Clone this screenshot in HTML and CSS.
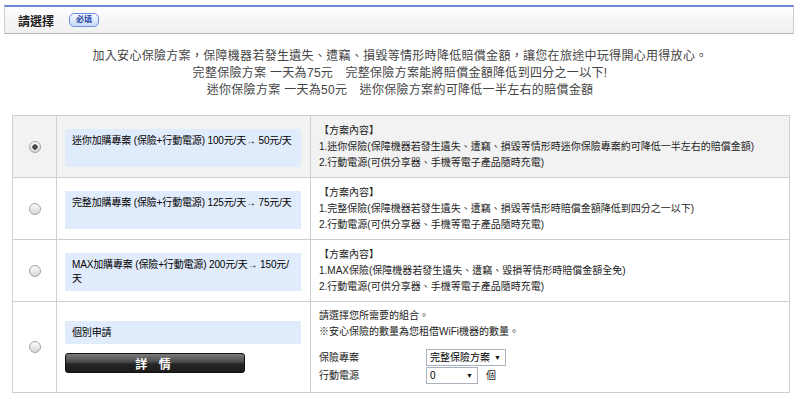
FILE: index.html
```html
<!DOCTYPE html>
<html lang="zh-Hant">
<head>
  <meta charset="UTF-8" />
  <title>請選擇</title>
  <link rel="stylesheet" href="styles.css">
</head>
<body>

  <!-- section heading -->
  <div class="section-head">
    <span class="section-title">請選擇</span>
    <span class="required">必填</span>
  </div>

  <div class="intro">
    <p>加入安心保險方案，保障機器若發生遺失、遭竊、損毀等情形時降低賠償金額，讓您在旅途中玩得開心用得放心。</p>
    <p>完整保險方案 一天為75元　完整保險方案能將賠償金額降低到四分之一以下!</p>
    <p>迷你保險方案 一天為50元　迷你保險方案約可降低一半左右的賠償金額</p>
  </div>

  <!-- plan list -->
  <table class="plans">
    <tr class="selected">
      <td class="pick"><input type="radio" name="plan" checked></td>
      <td class="name"><div class="name-box">迷你加購專案 (保險+行動電源) 100元/天→ 50元/天</div></td>
      <td class="desc">【方案內容】<br>1.迷你保險(保障機器若發生遺失、遭竊、損毀等情形時迷你保險專案約可降低一半左右的賠償金額)<br>2.行動電源(可供分享器、手機等電子產品隨時充電)</td>
    </tr>
    <tr>
      <td class="pick"><input type="radio" name="plan"></td>
      <td class="name"><div class="name-box">完整加購專案 (保險+行動電源) 125元/天→ 75元/天</div></td>
      <td class="desc">【方案內容】<br>1.完整保險(保障機器若發生遺失、遭竊、損毀等情形時賠償金額降低到四分之一以下)<br>2.行動電源(可供分享器、手機等電子產品隨時充電)</td>
    </tr>
    <tr>
      <td class="pick"><input type="radio" name="plan"></td>
      <td class="name"><div class="name-box">MAX加購專案 (保險+行動電源) 200元/天→ 150元/天</div></td>
      <td class="desc">【方案內容】<br>1.MAX保險(保障機器若發生遺失、遭竊、毀損等情形時賠償金額全免)<br>2.行動電源(可供分享器、手機等電子產品隨時充電)</td>
    </tr>
    <tr>
      <td class="pick"><input type="radio" name="plan"></td>
      <td class="name custom">
        <div class="name-box short">個別申請</div>
        <button class="detail-btn">詳 情</button>
      </td>
      <td class="desc custom">
        請選擇您所需要的組合。<br>※安心保險的數量為您租借WiFi機器的數量。
        <div class="combo">
          <span>保險專案</span>
          <span class="select-wrap wide">
            <select><option>完整保險方案</option><option>迷你保險方案</option></select>
            <span class="arrow">▼</span>
          </span>
          <span>行動電源</span>
          <span class="qty">
            <span class="select-wrap">
              <select><option>0</option><option>1</option><option>2</option></select>
              <span class="arrow">▼</span>
            </span>
            個
          </span>
        </div>
      </td>
    </tr>
  </table>

</body>
</html>
```

FILE: styles.css
```css
body {
  margin: 0;
  font-family: "Liberation Sans", "Noto Sans CJK TC", sans-serif;
  color: #222;
  background: #fff;
}

.section-head {
  display: flex;
  align-items: center;
  gap: 15px;
  height: 26px;
  margin: 5px 6px 0 4px;
  padding-left: 13px;
  border: 1px solid #cdcdcd;
  border-top: 2px solid #6f86d9;
  border-bottom-color: #b8b8b8;
  background: linear-gradient(#fdfdfd, #efefef);
}

.section-title {
  font-size: 12px;
  font-weight: bold;
  color: #222;
}

.required {
  width: 28px;
  height: 12px;
  line-height: 12px;
  text-align: center;
  font-size: 8px;
  font-weight: bold;
  color: #1f45a8;
  border: 1px solid #6c8ee0;
  border-radius: 5px;
  background: linear-gradient(#f6f9ff, #c6d9f7);
}

.intro {
  margin: 14px 0 16px;
  text-align: center;
  font-size: 12px;
  line-height: 17px;
  letter-spacing: 0.3px;
  color: #444;
}

.intro p {
  margin: 0;
}

.plans {
  border-collapse: collapse;
  width: 778px;
  margin-left: 12px;
  font-size: 10px;
  color: #222;
}

.plans td {
  border: 1px solid #cfcfcf;
  padding: 0;
}

.plans tr.selected td {
  background: #f2f2f2;
}

.pick {
  width: 43px;
  text-align: center;
  vertical-align: middle;
}

.pick input {
  appearance: none;
  -webkit-appearance: none;
  width: 12px;
  height: 12px;
  margin: 0;
  border: 1px solid #a3a3a3;
  border-radius: 50%;
  background: linear-gradient(#fcfcfc, #d6d6d6);
  vertical-align: middle;
}

.pick input:checked {
  background: radial-gradient(circle, #4a4a4a 0 2.4px, transparent 3px), linear-gradient(#fcfcfc, #d6d6d6);
}

.name {
  width: 236px;
  padding: 13px 9px 10px 8px !important;
  vertical-align: top;
}

.name-box {
  height: 38px;
  box-sizing: border-box;
  padding: 5px 6px 5px 7px;
  line-height: 14px;
  letter-spacing: -0.15px;
  color: #000;
  background: #e0ebfb;
}

.name.custom {
  vertical-align: middle;
  padding: 0 9px 0 8px !important;
}

.name-box.short {
  height: 23px;
  padding: 0 7px;
  line-height: 23px;
}

.detail-btn {
  display: block;
  width: 180px;
  height: 20px;
  margin-top: 9px;
  padding: 0;
  border: 1px solid #111;
  border-radius: 3px;
  background: linear-gradient(#7a7a7a, #4a4a4a 45%, #262626 55%, #1b1b1b);
  color: #fff;
  font-family: inherit;
  font-size: 12px;
  font-weight: bold;
  letter-spacing: 4px;
}

.desc {
  padding: 0 8px !important;
  vertical-align: middle;
  line-height: 16px;
}

.desc.custom {
  vertical-align: top;
  padding: 6px 8px 8px !important;
}

.combo {
  display: grid;
  grid-template-columns: 107px auto;
  grid-auto-rows: 17px;
  row-gap: 1px;
  align-items: center;
  margin-top: 9px;
  line-height: 17px;
}

.qty {
  display: flex;
  align-items: center;
  gap: 8px;
}

.select-wrap {
  position: relative;
  display: inline-block;
  width: 52px;
  height: 17px;
}

.select-wrap.wide {
  width: 80px;
}

.select-wrap select {
  appearance: none;
  -webkit-appearance: none;
  width: 100%;
  height: 17px;
  margin: 0;
  padding: 0 0 0 3px;
  border: 1px solid #a9b2be;
  border-radius: 0;
  background: #fff;
  font-family: inherit;
  font-size: 10px;
  color: #000;
}

.select-wrap .arrow {
  position: absolute;
  right: 5px;
  top: 0;
  line-height: 17px;
  font-size: 7px;
  color: #111;
  pointer-events: none;
}
```
